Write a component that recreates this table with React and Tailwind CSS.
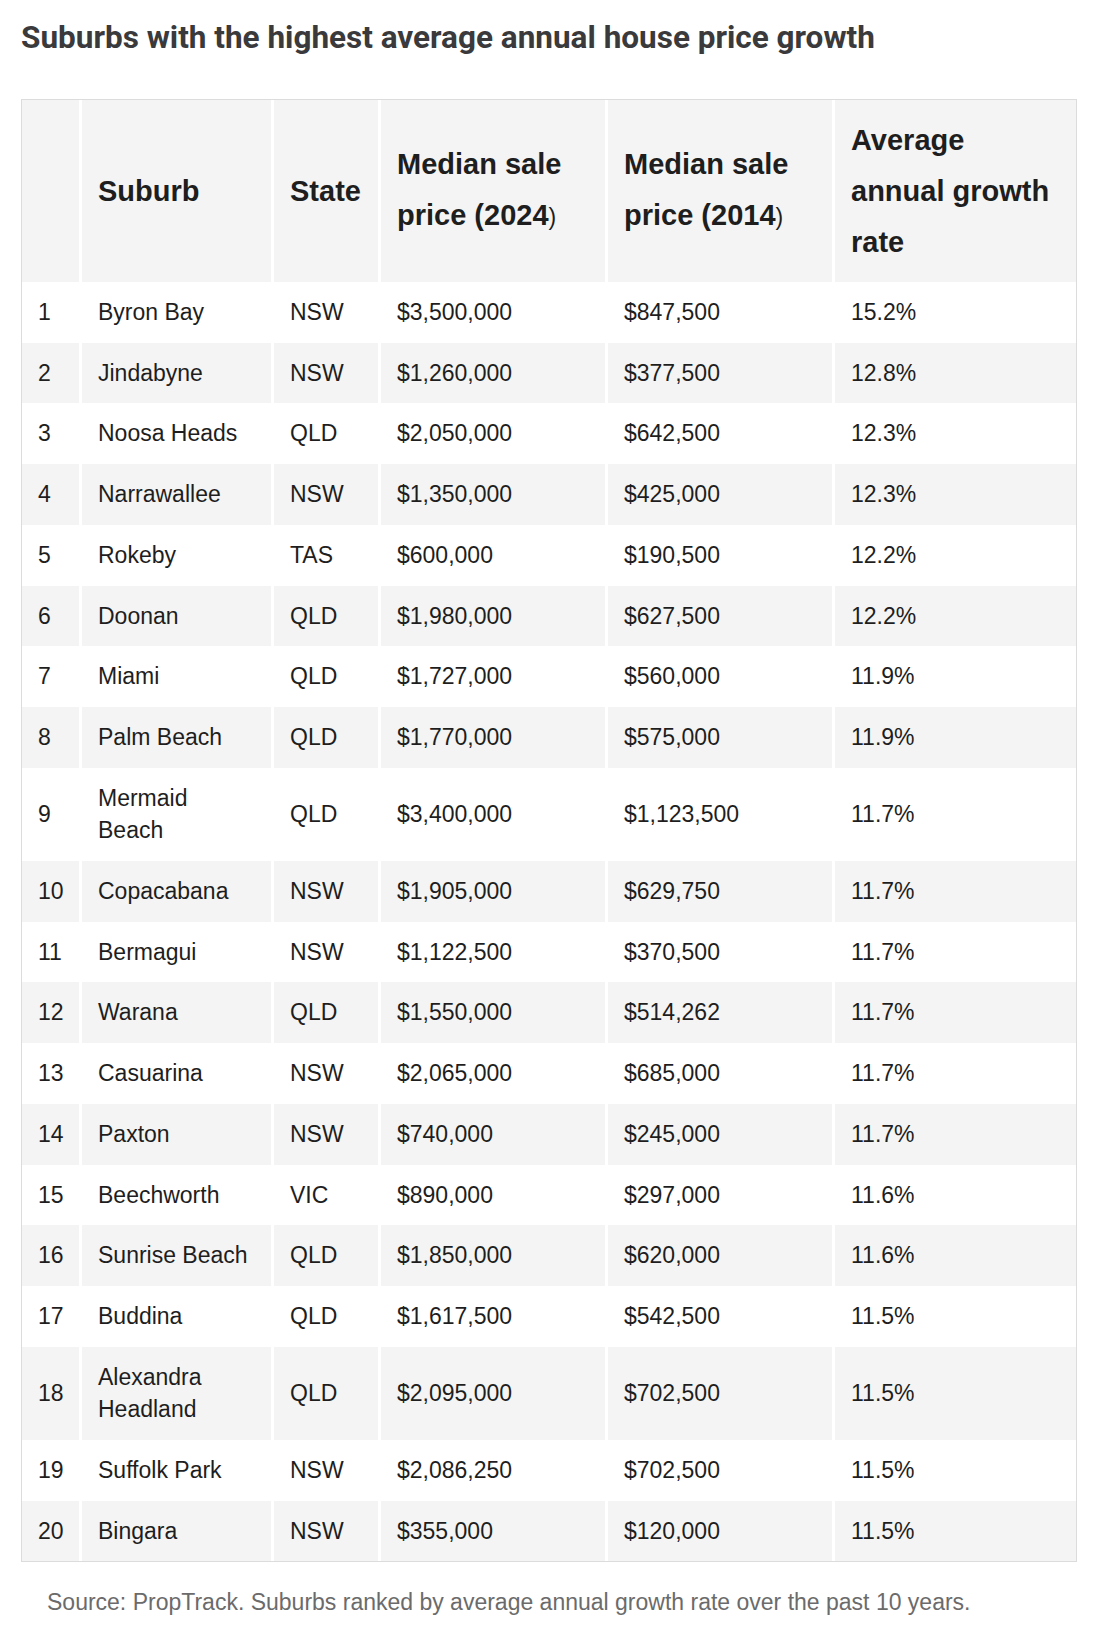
import React from "react";

const rows = [
  ["1", "Byron Bay", "NSW", "$3,500,000", "$847,500", "15.2%"],
  ["2", "Jindabyne", "NSW", "$1,260,000", "$377,500", "12.8%"],
  ["3", "Noosa Heads", "QLD", "$2,050,000", "$642,500", "12.3%"],
  ["4", "Narrawallee", "NSW", "$1,350,000", "$425,000", "12.3%"],
  ["5", "Rokeby", "TAS", "$600,000", "$190,500", "12.2%"],
  ["6", "Doonan", "QLD", "$1,980,000", "$627,500", "12.2%"],
  ["7", "Miami", "QLD", "$1,727,000", "$560,000", "11.9%"],
  ["8", "Palm Beach", "QLD", "$1,770,000", "$575,000", "11.9%"],
  ["9", "Mermaid Beach", "QLD", "$3,400,000", "$1,123,500", "11.7%"],
  ["10", "Copacabana", "NSW", "$1,905,000", "$629,750", "11.7%"],
  ["11", "Bermagui", "NSW", "$1,122,500", "$370,500", "11.7%"],
  ["12", "Warana", "QLD", "$1,550,000", "$514,262", "11.7%"],
  ["13", "Casuarina", "NSW", "$2,065,000", "$685,000", "11.7%"],
  ["14", "Paxton", "NSW", "$740,000", "$245,000", "11.7%"],
  ["15", "Beechworth", "VIC", "$890,000", "$297,000", "11.6%"],
  ["16", "Sunrise Beach", "QLD", "$1,850,000", "$620,000", "11.6%"],
  ["17", "Buddina", "QLD", "$1,617,500", "$542,500", "11.5%"],
  ["18", "Alexandra Headland", "QLD", "$2,095,000", "$702,500", "11.5%"],
  ["19", "Suffolk Park", "NSW", "$2,086,250", "$702,500", "11.5%"],
  ["20", "Bingara", "NSW", "$355,000", "$120,000", "11.5%"],
];

export default function App() {
  return (
    <div className="w-[1100px] bg-white pl-[21px] pt-[18px] pb-[20px]">
      <h2
        className="text-[31.5px] leading-[40px] font-bold tracking-normal text-[#3a3a3c]"
        style={{ fontFamily: "Roboto, 'Liberation Sans', sans-serif" }}
      >
        Suburbs with the highest average annual house price growth
      </h2>
      <div className="h-[41px]" />
      <table
        className="w-[1056px] table-fixed border-separate border-spacing-0 border border-[#dcdcdc] text-[#1e1e1e]"
        style={{ fontFamily: "'Liberation Sans', Arial, sans-serif" }}
      >
        <colgroup>
          <col className="w-[57px]" />
          <col className="w-[192px]" />
          <col className="w-[107px]" />
          <col className="w-[227px]" />
          <col className="w-[227px]" />
          <col className="w-[244px]" />
        </colgroup>
        <thead>
          <tr className="bg-[#f4f4f4] text-left align-middle text-[29px] font-bold leading-[51px]">
            <th className="pl-4 pr-4 py-[14.5px]"></th>
            <th className="border-l-[3px] border-white pl-4 pr-4 py-[14.5px]">Suburb</th>
            <th className="border-l-[3px] border-white pl-4 pr-2 py-[14.5px]">State</th>
            <th className="border-l-[3px] border-white pl-4 pr-4 py-[14.5px]">
              Median sale price (2024<span className="font-normal text-[23px]">)</span>
            </th>
            <th className="border-l-[3px] border-white pl-4 pr-4 py-[14.5px]">
              Median sale price (2014<span className="font-normal text-[23px]">)</span>
            </th>
            <th className="border-l-[3px] border-white pl-4 pr-4 py-[14.5px]">Average annual growth rate</th>
          </tr>
        </thead>
        <tbody>
          {rows.map((r, i) => (
            <tr
              key={r[0]}
              className={`${i % 2 === 1 ? "bg-[#f4f4f4]" : "bg-white"} align-middle text-[23px] leading-[32.7px]`}
            >
              <td className="pl-4 pr-1 py-[14px]">{r[0]}</td>
              <td className="border-l-[3px] border-white pl-4 pr-4 py-[14px]">{r[1]}</td>
              <td className="border-l-[3px] border-white pl-4 pr-2 py-[14px]">{r[2]}</td>
              <td className="border-l-[3px] border-white pl-4 pr-4 py-[14px]">{r[3]}</td>
              <td className="border-l-[3px] border-white pl-4 pr-4 py-[14px]">{r[4]}</td>
              <td className="border-l-[3px] border-white pl-4 pr-4 py-[14px]">{r[5]}</td>
            </tr>
          ))}
        </tbody>
      </table>
      <p
        className="mt-[25px] pl-[26px] text-[23px] leading-[30px] text-[#6b6b6b]"
        style={{ fontFamily: "'Liberation Sans', Arial, sans-serif" }}
      >
        Source: PropTrack. Suburbs ranked by average annual growth rate over the past 10 years.
      </p>
    </div>
  );
}
